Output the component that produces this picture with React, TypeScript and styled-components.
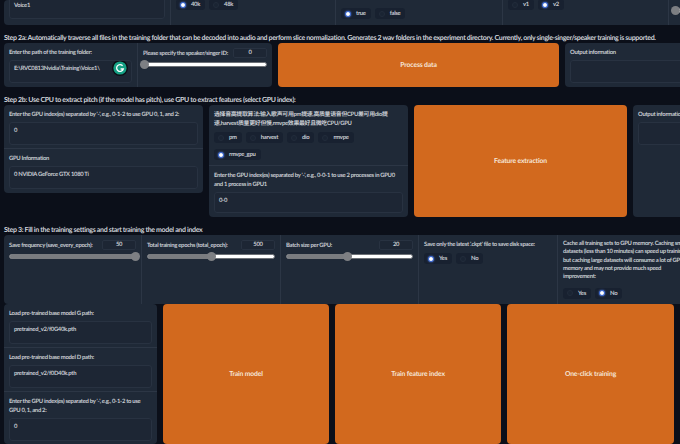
import React from "react";
import styled, { createGlobalStyle } from "styled-components";

const GlobalStyle = createGlobalStyle`
  html, body {
    margin: 0;
    padding: 0;
    background: #0b0f19;
  }
  body {
    font-family: Lato, "Noto Sans CJK SC", sans-serif;
    text-rendering: geometricPrecision;
    letter-spacing: -0.3px;
  }
`;

const Page = styled.div`
  width: 680px;
  height: 444px;
  overflow: hidden;
  background: #0b0f19;
`;

const Content = styled.div`
  width: 720px;
  padding-left: 4px;
  box-sizing: border-box;
`;

const StepTitle = styled.div`
  height: 18px;
  display: flex;
  align-items: flex-end;
  font-size: 7px;
  line-height: 9px;
  font-weight: 700;
  letter-spacing: -0.33px;
  color: #d0d3d9;
  white-space: nowrap;
`;

const Row = styled.div<{ $h: number; $columns: string }>`
  height: ${(p) => p.$h}px;
  display: grid;
  grid-template-columns: ${(p) => p.$columns};
  gap: 6px;
`;

const Panel = styled.div<{ $h?: number }>`
  background: #1f2937;
  border-radius: 4px;
  overflow: hidden;
  ${(p) => (p.$h ? `height: ${p.$h}px;` : "")}
`;

const Columns = styled.div<{ $columns: string }>`
  display: grid;
  grid-template-columns: ${(p) => p.$columns};
  height: 100%;
`;

const Cell = styled.div<{ $clipTop?: boolean }>`
  box-sizing: border-box;
  padding: 5px;
  border-left: 1px solid #2c3645;
  overflow: hidden;
  display: flex;
  flex-direction: column;
  &:first-child {
    border-left: 0;
  }
  ${(p) => (p.$clipTop ? "justify-content: flex-end; padding-bottom: 6px;" : "")}
`;

const Stack = styled.div`
  padding: 5px 5px 3px;
  border-top: 1px solid #2c3645;
  &:first-child {
    border-top: 0;
  }
`;

const Label = styled.div`
  font-size: 5.9px;
  line-height: 9px;
  font-weight: 700;
  color: #c8ccd2;
`;

const LabelRow = styled.div`
  display: flex;
  justify-content: space-between;
  align-items: center;
  height: 10px;
`;

const Input = styled.div<{ $h?: number }>`
  box-sizing: border-box;
  flex-shrink: 0;
  height: ${(p) => p.$h ?? 23}px;
  margin-top: 3px;
  padding: 3px 4px;
  border: 1px solid #283241;
  border-radius: 3px;
  background: #1d2634;
  font-size: 5.9px;
  line-height: 9px;
  font-weight: 700;
  color: #c8ccd2;
  white-space: nowrap;
  overflow: hidden;
  position: relative;
`;

const NumberBox = styled.div`
  box-sizing: border-box;
  width: 34px;
  height: 10px;
  border: 1px solid #283241;
  border-radius: 2px;
  background: #1d2634;
  font-size: 5.9px;
  line-height: 8px;
  font-weight: 700;
  text-align: center;
  color: #c8ccd2;
`;

const Track = styled.div`
  position: relative;
  flex-shrink: 0;
  height: 5px;
  margin-top: 4px;
  border-radius: 3px;
  background: #ffffff;
  border: 1px solid #6b6f75;
  box-sizing: border-box;
`;

const TrackFill = styled.div`
  position: absolute;
  left: 0;
  top: -1px;
  bottom: -1px;
  border-radius: 3px;
  background: #7a7c80;
`;

const Thumb = styled.div`
  position: absolute;
  top: 50%;
  width: 9px;
  height: 9px;
  margin: -4.5px 0 0 -4.5px;
  border-radius: 50%;
  background: #7d7f83;
`;

const Spacer = styled.div<{ $h: number }>`
  flex-shrink: 0;
  height: ${(p) => p.$h}px;
`;

const RadioRow = styled.div`
  display: flex;
  flex-wrap: wrap;
  flex-shrink: 0;
  gap: 6px 4px;
  margin-top: 4px;
`;

const Pill = styled.div`
  display: flex;
  align-items: center;
  gap: 5px;
  height: 11px;
  padding: 0 5px 0 4px;
  border-radius: 3px;
  background: #182130;
  font-size: 5.9px;
  font-weight: 700;
  color: #c8ccd2;
`;

const Dot = styled.span<{ $on?: boolean }>`
  box-sizing: border-box;
  width: 6px;
  height: 6px;
  border-radius: 50%;
  background: ${(p) => (p.$on ? "#ffffff" : "#1a2433")};
  border: ${(p) => (p.$on ? "1.5px solid #2f5fd0" : "1px solid #222c3b")};
  box-shadow: ${(p) => (p.$on ? "0 0 2px #4a78e0" : "none")};
`;

const OrangeButton = styled.div`
  display: flex;
  align-items: center;
  justify-content: center;
  border-radius: 4px;
  background: #d2691e;
  font-size: 6.8px;
  letter-spacing: -0.15px;
  font-weight: 700;
  color: #f6e6d8;
`;

const LeftColumn = styled.div`
  background: #1f2937;
  border-radius: 4px;
  overflow: hidden;
`;

const CacheLabel = styled(Label)`
  white-space: nowrap;
  line-height: 8.33px;
  margin-bottom: 2px;
`;

const Badge = styled.svg`
  position: absolute;
  right: 3px;
  top: -1px;
  width: 16px;
  height: 16px;
`;

const Radio = ({ label, on }: { label: string; on?: boolean }) => (
  <Pill>
    <Dot $on={on} />
    {label}
  </Pill>
);

const Slider = ({ pct }: { pct: number }) => (
  <Track>
    <TrackFill style={{ width: `${pct}%` }} />
    <Thumb style={{ left: `${pct}%` }} />
  </Track>
);

const SliderCell = ({
  label,
  value,
  pct,
}: {
  label: string;
  value: string;
  pct: number;
}) => (
  <Cell>
    <LabelRow>
      <Label>{label}</Label>
      <NumberBox>{value}</NumberBox>
    </LabelRow>
    <Slider pct={pct} />
  </Cell>
);

export default function App() {
  return (
    <Page>
      <GlobalStyle />
      <Content>
        <Panel $h={25}>
          <Columns $columns="166px 165px 167px 166px 1fr">
            <Cell $clipTop>
              <Input $h={22}>Voice1</Input>
            </Cell>
            <Cell $clipTop>
              <RadioRow>
                <Radio label="40k" on />
                <Radio label="48k" />
              </RadioRow>
              <Spacer $h={9} />
            </Cell>
            <Cell $clipTop>
              <RadioRow>
                <Radio label="true" on />
                <Radio label="false" />
              </RadioRow>
            </Cell>
            <Cell $clipTop>
              <RadioRow>
                <Radio label="v1" />
                <Radio label="v2" on />
              </RadioRow>
              <Spacer $h={9} />
            </Cell>
            <Cell $clipTop>
              <Slider pct={0} />
              <Spacer $h={6} />
            </Cell>
          </Columns>
        </Panel>

        <StepTitle>
          Step 2a: Automatically traverse all files in the training folder that can be decoded
          into audio and perform slice normalization. Generates 2 wav folders in the experiment
          directory. Currently, only single-singer/speaker training is supported.
        </StepTitle>
        <Row $h={44} $columns="268px 281px 1fr">
          <Panel>
            <Columns $columns="133px 1fr">
              <Cell>
                <Label>Enter the path of the training folder:</Label>
                <Input>
                  E:\RVC0813Nvidia\Training\Voice1\
                  <Badge viewBox="0 0 16 16">
                    <circle cx="8" cy="8" r="8" fill="#0c0f14" />
                    <circle cx="8" cy="8" r="6.6" fill="#15a085" />
                    <path
                      d="M10.6 5.8A3.4 3.4 0 1 0 11.3 9H8.6"
                      fill="none"
                      stroke="#ffffff"
                      strokeWidth="1.3"
                    />
                  </Badge>
                </Input>
              </Cell>
              <Cell>
                <LabelRow>
                  <Label>Please specify the speaker/singer ID:</Label>
                  <NumberBox>0</NumberBox>
                </LabelRow>
                <Slider pct={0} />
              </Cell>
            </Columns>
          </Panel>
          <OrangeButton>Process data</OrangeButton>
          <Panel>
            <Stack>
              <Label>Output information</Label>
              <Input>&nbsp;</Input>
            </Stack>
          </Panel>
        </Row>

        <StepTitle>
          Step 2b: Use CPU to extract pitch (if the model has pitch), use GPU to extract features
          (select GPU index):
        </StepTitle>
        <Row $h={112} $columns="199px 199px 213px 1fr">
          <Panel $h={88}>
            <Stack>
              <Label>Enter the GPU index(es) separated by '-', e.g., 0-1-2 to use GPU 0, 1, and 2:</Label>
              <Input>0</Input>
            </Stack>
            <Stack>
              <Label>GPU Information</Label>
              <Input>0 NVIDIA GeForce GTX 1080 Ti</Input>
            </Stack>
          </Panel>
          <Panel>
            <Stack>
              <Label>
                选择音高提取算法:输入歌声可用pm提速,高质量语音但CPU差可用dio提速,harvest质量更好但慢,rmvpe效果最好且微吃CPU/GPU
              </Label>
              <RadioRow>
                <Radio label="pm" />
                <Radio label="harvest" />
                <Radio label="dio" />
                <Radio label="rmvpe" />
                <Radio label="rmvpe_gpu" on />
              </RadioRow>
              <Spacer $h={2} />
            </Stack>
            <Stack>
              <Label>
                Enter the GPU index(es) separated by '-', e.g., 0-0-1 to use 2 processes in GPU0
                and 1 process in GPU1
              </Label>
              <Input $h={21}>0-0</Input>
            </Stack>
          </Panel>
          <OrangeButton>Feature extraction</OrangeButton>
          <Panel>
            <Stack>
              <Label>Output information</Label>
              <Input>&nbsp;</Input>
            </Stack>
          </Panel>
        </Row>

        <StepTitle>Step 3: Fill in the training settings and start training the model and index</StepTitle>
        <Panel $h={69}>
          <Columns $columns="137px 139px 138px 139px 1fr">
            <SliderCell label="Save frequency (save_every_epoch):" value="50" pct={100} />
            <SliderCell label="Total training epochs (total_epoch):" value="500" pct={50} />
            <SliderCell label="Batch size per GPU:" value="20" pct={48} />
            <Cell>
              <Label>Save only the latest '.ckpt' file to save disk space:</Label>
              <RadioRow>
                <Radio label="Yes" on />
                <Radio label="No" />
              </RadioRow>
            </Cell>
            <Cell>
              <CacheLabel>
                Cache all training sets to GPU memory. Caching small
                <br />
                datasets (less than 10 minutes) can speed up training,
                <br />
                but caching large datasets will consume a lot of GPU
                <br />
                memory and may not provide much speed
                <br />
                improvement:
              </CacheLabel>
              <RadioRow>
                <Radio label="Yes" />
                <Radio label="No" on />
              </RadioRow>
            </Cell>
          </Columns>
        </Panel>
        <Row $h={140} $columns="153px 166px 166px 167px">
          <LeftColumn>
            <Stack>
              <Label>Load pre-trained base model G path:</Label>
              <Input>pretrained_v2/f0G40k.pth</Input>
            </Stack>
            <Stack>
              <Label>Load pre-trained base model D path:</Label>
              <Input>pretrained_v2/f0D40k.pth</Input>
            </Stack>
            <Stack>
              <Label>Enter the GPU index(es) separated by '-', e.g., 0-1-2 to use GPU 0, 1, and 2:</Label>
              <Input>0</Input>
            </Stack>
          </LeftColumn>
          <OrangeButton>Train model</OrangeButton>
          <OrangeButton>Train feature index</OrangeButton>
          <OrangeButton>One-click training</OrangeButton>
        </Row>
      </Content>
    </Page>
  );
}
